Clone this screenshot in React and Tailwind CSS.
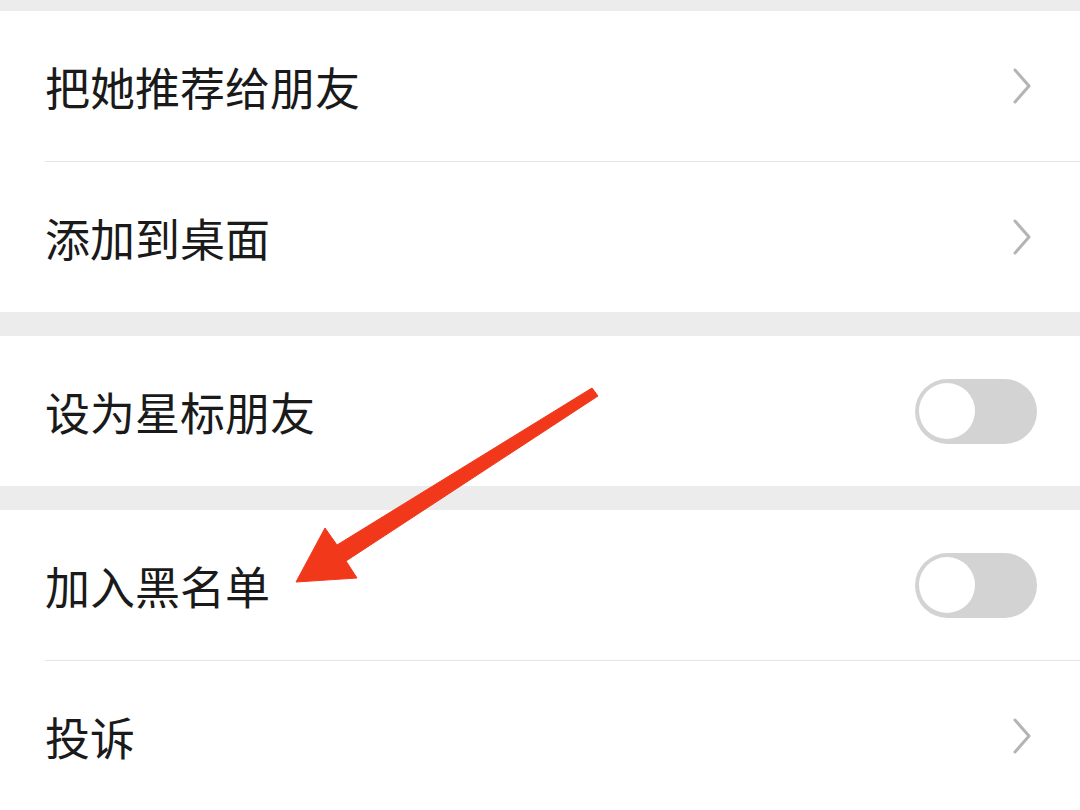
import React from 'react';

const font = { fontFamily: '"Noto Sans CJK SC", "Noto Sans", sans-serif' };

const Chevron = () => (
  <svg width="20" height="36" viewBox="0 0 20 36" className="mr-[48px]">
    <polyline points="3,2 17,18 3,34" fill="none" stroke="#b4b4b4" strokeWidth="3" strokeLinecap="round" strokeLinejoin="round" />
  </svg>
);

const Toggle = () => (
  <div className="mr-[43px] w-[122px] h-[65px] rounded-full bg-[#d3d3d3] flex items-center pl-[4px]">
    <div className="w-[56px] h-[56px] rounded-full bg-white" />
  </div>
);

const Row = ({ label, right }) => (
  <div className="h-[150px] flex items-center justify-between bg-white">
    <span className="pl-[45px] text-[45px] leading-none text-[#1a1a1a]" style={font}>{label}</span>
    {right === 'chevron' ? <Chevron /> : <Toggle />}
  </div>
);

const Divider = () => (
  <div className="bg-white">
    <div className="ml-[45px] h-px bg-[#e5e5e5]" />
  </div>
);

export default function App() {
  return (
    <div className="relative w-[1080px] h-[810px] overflow-hidden bg-[#ececec]">
      <div className="h-[11px]" />
      {/* Share section */}
      <Row label="把她推荐给朋友" right="chevron" />
      <Divider />
      <Row label="添加到桌面" right="chevron" />
      <div className="h-[24px]" />
      {/* Star */}
      <Row label="设为星标朋友" right="toggle" />
      <div className="h-[24px]" />
      {/* Blacklist / report */}
      <Row label="加入黑名单" right="toggle" />
      <Divider />
      <Row label="投诉" right="chevron" />

      {/* Red annotation arrow */}
      <svg className="absolute left-0 top-0 pointer-events-none" width="1080" height="810" viewBox="0 0 1080 810">
        <polygon
          points="296,582 325,528 337,545 592,388 598,396 346,561 357,578"
          fill="#f2381b"
          strokeLinejoin="round"
          stroke="#f2381b"
          strokeWidth="1"
        />
      </svg>
    </div>
  );
}
